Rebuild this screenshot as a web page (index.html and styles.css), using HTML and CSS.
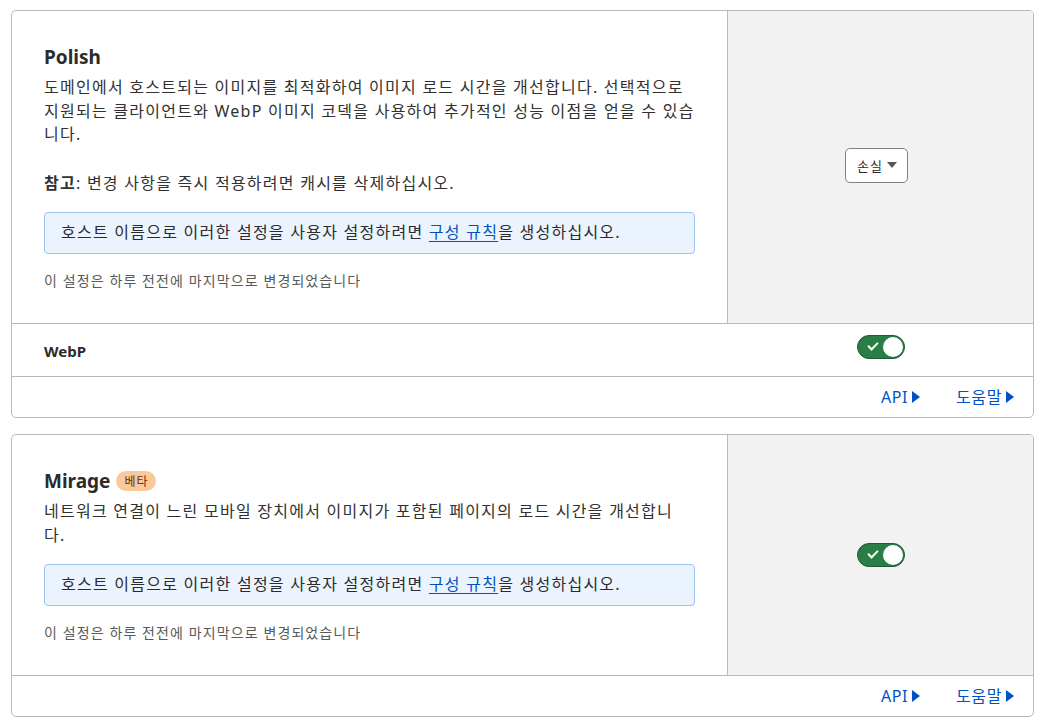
FILE: index.html
```html
<!DOCTYPE html>
<html lang="ko">
<head>
    <meta charset="UTF-8">
    <meta name="viewport" content="width=device-width, initial-scale=1.0">
    <title>이미지 최적화</title>
    <link rel="stylesheet" href="styles.css">
</head>
<body>
    <div class="card">
        <div class="row">
            <div class="main">
                <h2 class="title">Polish</h2>
                <p class="desc">도메인에서 호스트되는 이미지를 최적화하여 이미지 로드 시간을 개선합니다. 선택적으로 지원되는 클라이언트와 WebP 이미지 코덱을 사용하여 추가적인 성능 이점을 얻을 수 있습니다.</p>
                <p class="desc note"><strong>참고</strong>: 변경 사항을 즉시 적용하려면 캐시를 삭제하십시오.</p>
                <div class="info">호스트 이름으로 이러한 설정을 사용자 설정하려면 <a href="#">구성 규칙</a>을 생성하십시오.</div>
                <p class="changed">이 설정은 하루 전전에 마지막으로 변경되었습니다</p>
            </div>
            <div class="side">
                <button class="select">손실 <span class="caret"></span></button>
            </div>
        </div>
        <div class="row sub">
            <div class="main">
                <span class="label">WebP</span>
            </div>
            <div class="side plain">
                <span class="toggle on"><span class="knob"></span></span>
            </div>
        </div>
        <div class="footer">
            <a href="#" class="more">API <span class="arrow"></span></a>
            <a href="#" class="more">도움말 <span class="arrow"></span></a>
        </div>
    </div>

    <div class="card">
        <div class="row">
            <div class="main">
                <h2 class="title">Mirage <span class="badge">베타</span></h2>
                <p class="desc narrow">네트워크 연결이 느린 모바일 장치에서 이미지가 포함된 페이지의 로드 시간을 개선합니다.</p>
                <div class="info">호스트 이름으로 이러한 설정을 사용자 설정하려면 <a href="#">구성 규칙</a>을 생성하십시오.</div>
                <p class="changed">이 설정은 하루 전전에 마지막으로 변경되었습니다</p>
            </div>
            <div class="side">
                <span class="toggle on"><span class="knob"></span></span>
            </div>
        </div>
        <div class="footer">
            <a href="#" class="more">API <span class="arrow"></span></a>
            <a href="#" class="more">도움말 <span class="arrow"></span></a>
        </div>
    </div>
</body>
</html>
```

FILE: styles.css
```css
body {
    margin: 0;
    padding: 10px 9px 0 11px;
    font-family: "Noto Sans", "Noto Sans CJK KR", sans-serif;
    color: #313131;
    background: white;
}
.card {
    border: 1px solid #b9b9b9;
    border-radius: 5px;
    margin-bottom: 16px;
    overflow: hidden;
}
.row {
    display: grid;
    grid-template-columns: 1fr 306px;
}
.row.sub {
    border-top: 1px solid #b9b9b9;
}
.main {
    padding: 32px 32px 32.5px 32px;
}
.row.sub .main {
    padding: 14px 32px 12px 32px;
}
.side {
    background-color: #f2f2f2;
    border-left: 1px solid #b9b9b9;
    display: flex;
    align-items: center;
    justify-content: center;
}
.side.plain {
    background: white;
    border-left: none;
    padding-left: 1px;
    align-items: flex-start;
    padding-top: 11px;
}
.title {
    margin: 0 0 5px 0;
    font-size: 19px;
    line-height: 28px;
    font-weight: 700;
    color: #2b2b2b;
    display: flex;
    align-items: center;
    gap: 6px;
}
.badge {
    font-family: "Noto Sans CJK KR", sans-serif;
    font-size: 12px;
    font-weight: 400;
    letter-spacing: 1px;
    line-height: 20px;
    padding: 0 7px 0 8px;
    border-radius: 10px;
    background-color: #fbc899;
    color: #6b2c0a;
}
.desc {
    margin: 0;
    font-size: 16px;
    line-height: 23.5px;
    letter-spacing: 1.25px;
    color: #313131;
}
.desc.narrow {
    margin-right: 3.5px;
}
.note {
    margin-top: 25px;
}
.note strong {
    font-weight: 700;
}
.info {
    margin-top: 17px;
    padding: 8px 16px;
    background-color: #ebf3fe;
    border: 1px solid #9cc3f4;
    border-radius: 4px;
    font-size: 16px;
    line-height: 23.5px;
    letter-spacing: 1.25px;
    color: #2b2b2b;
}
.info a {
    color: #0051c3;
    text-decoration: underline;
    text-underline-offset: 3px;
}
.changed {
    margin: 17px 0 0 0;
    font-size: 14px;
    line-height: 20px;
    letter-spacing: 1.1px;
    color: #595959;
}
.label {
    font-size: 15px;
    font-weight: 700;
    line-height: 26px;
    color: #2b2b2b;
}
.select {
    font-family: "Noto Sans CJK KR", sans-serif;
    font-size: 13px;
    letter-spacing: 1px;
    color: #2b2b2b;
    background: white;
    border: 1px solid #808080;
    border-radius: 5px;
    height: 35px;
    padding: 0 10px 0 11px;
    display: flex;
    align-items: center;
    gap: 4px;
    margin-right: 8px;
    margin-bottom: 4px;
}
.caret {
    width: 0;
    height: 0;
    border-left: 5px solid transparent;
    border-right: 5px solid transparent;
    border-top: 6px solid #555;
}
.toggle {
    display: inline-block;
    position: relative;
    width: 48px;
    height: 24px;
    border-radius: 12px;
    background-color: #2a7d45;
    border: 1px solid #1d5b31;
    box-sizing: border-box;
}
.toggle::before {
    content: "";
    position: absolute;
    left: 10px;
    top: 6px;
    width: 8px;
    height: 4px;
    border-left: 2px solid white;
    border-bottom: 2px solid white;
    transform: rotate(-45deg);
}
.knob {
    position: absolute;
    right: 1px;
    top: 1px;
    width: 20px;
    height: 20px;
    border-radius: 50%;
    background: white;
}
.footer {
    border-top: 1px solid #b9b9b9;
    display: flex;
    justify-content: flex-end;
    gap: 36px;
    padding: 8px 19px 8px 0;
    height: 24px;
}
.more {
    font-size: 16px;
    line-height: 24px;
    letter-spacing: 0.6px;
    color: #0051c3;
    text-decoration: none;
    display: flex;
    align-items: center;
    gap: 4px;
}
.arrow {
    width: 0;
    height: 0;
    border-top: 6px solid transparent;
    border-bottom: 6px solid transparent;
    border-left: 8px solid #0051c3;
}
```
